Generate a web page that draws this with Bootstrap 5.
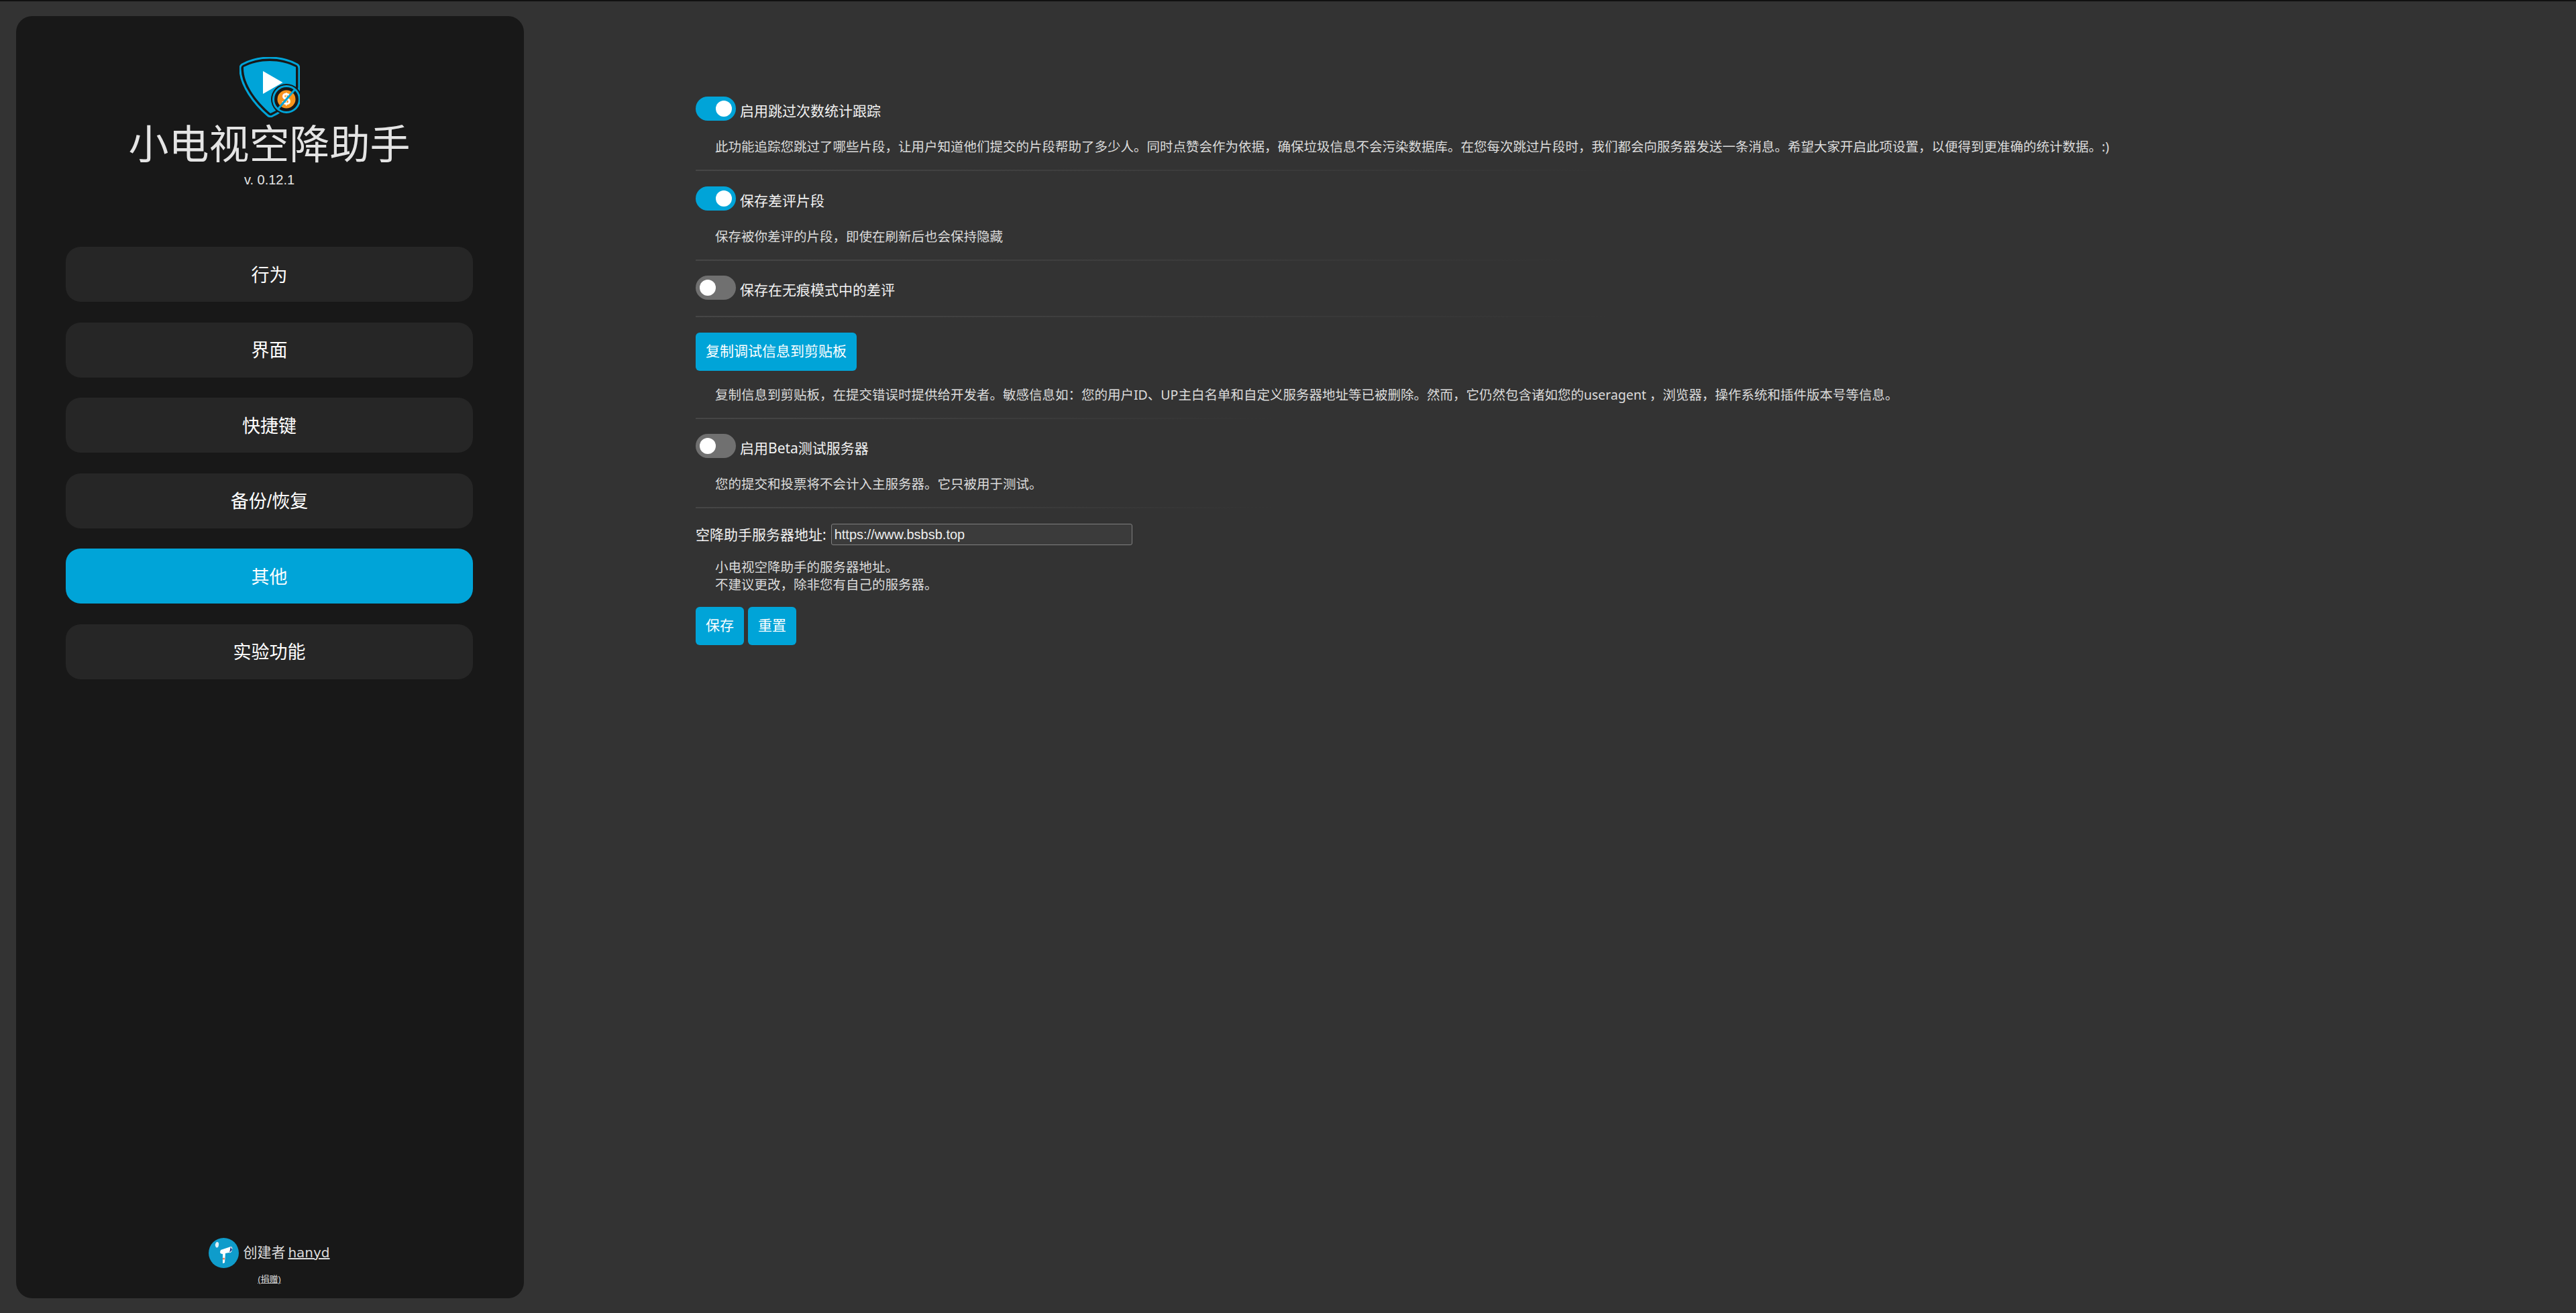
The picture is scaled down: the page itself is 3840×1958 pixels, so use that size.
<!DOCTYPE html>
<html lang="zh-CN">
<head>
  <meta charset="UTF-8" />
  <title>小电视空降助手</title>
  <link href="https://cdn.jsdelivr.net/npm/bootstrap@5.3.0/dist/css/bootstrap.min.css" rel="stylesheet" />
  <style>
    html, body { height: 100%; }
    body {
      background: #333;
      color: #e6e6e6;
      font-family: "Liberation Sans", "Noto Sans CJK SC", sans-serif;
      border-top: 2px solid #111;
      overflow: hidden;
    }
    .side-panel {
      width: 757px;
      height: 1912px;
      margin: 22px 0 0 24px;
      background: #181818;
      border-radius: 24px;
      padding: 61px 76px 0 74px;
    }
    .side-logo { width: 90px; height: 90px; display: block; }
    .side-title { font-size: 60px; line-height: 70px; font-weight: 400; margin: 7px 0 0; color: #e4e4e4; white-space: nowrap; }
    .side-ver { font-size: 20px; line-height: 24px; margin-top: 4px; color: #e4e4e4; }
    .side-menu { margin-top: 88px; gap: 30.5px; }
    .side-item {
      height: 82px;
      border-radius: 22px;
      background: #262626;
      color: #fff;
      font-size: 27px;
      border: 0;
      padding-top: 10px;
    }
    .side-item:hover { background: #2e2e2e; color: #fff; }
    .side-item.on { background: #00a4d8; }
    .side-foot { margin-bottom: 20px; color: #ddd; }
    .foot-line { font-size: 21px; line-height: 45px; gap: 6px; }
    .foot-line a, .foot-gift a { color: #ddd; }
    .foot-name { font-family: "DejaVu Sans", sans-serif; font-size: 20px; margin-left: 4px; }
    .foot-gift { font-size: 13px; line-height: 16px; margin-top: 9px; }
    .main-panel { padding: 142px 0 0 256px; flex: 1; font-family: "Noto Sans", "Noto Sans CJK SC", sans-serif; }
    .opt-row { font-size: 21px; height: 36px; color: #f2f2f2; gap: 6px; }
    .opt-row label { line-height: 26px; padding-top: 6px; }
    .form-switch .sw-toggle {
      width: 60px;
      height: 36px;
      margin: 0;
      float: none;
      border: 0;
      background-color: #707070;
      --bs-form-switch-bg: url("data:image/svg+xml,%3csvg xmlns='http://www.w3.org/2000/svg' viewBox='-4 -4 8 8'%3e%3ccircle r='2.67' fill='%23fff'/%3e%3c/svg%3e");
      box-shadow: none;
    }
    .form-switch .sw-toggle:checked {
      background-color: #00a4d8;
      --bs-form-switch-bg: url("data:image/svg+xml,%3csvg xmlns='http://www.w3.org/2000/svg' viewBox='-4 -4 8 8'%3e%3ccircle r='2.67' fill='%23fff'/%3e%3c/svg%3e");
    }
    .sw-wrap { padding: 0; margin: 0; min-height: 0; display: flex; }
    .opt-note { font-size: 19.5px; line-height: 26px; color: #dcdcdc; margin: 26px 0 0 29px; white-space: nowrap; }
    .opt-note.tight { margin-top: 23px; }
    .opt-note.srv { margin-top: 20px; }
    .fade-rule { height: 2px; margin: 21px 0 22.5px; background: linear-gradient(to right, #464646, #333); }
    .fade-rule.no-note { margin-top: 24px; }
    .w-a { width: 1411px; }
    .w-b { width: 1315px; }
    .w-c { width: 1365px; }
    .w-d { width: 860px; }
    .sky-btn {
      background: #00a4d8;
      color: #fff;
      border: 0;
      height: 57px;
      border-radius: 6px;
      font-size: 21px;
      padding: 0 15px;
    }
    .sky-btn:hover { background: #0094c4; color: #fff; }
    .srv-row { font-size: 21px; line-height: 32px; color: #f2f2f2; gap: 7px; }
    .srv-input {
      width: 449px;
      height: 32px;
      background: #3b3b3b;
      border: 1.5px solid #808080;
      border-radius: 3px;
      color: #eee;
      font-family: "Liberation Sans", sans-serif;
      font-size: 20px;
      padding: 0 4px;
      outline: 0;
    }
    .srv-actions { gap: 6px; }
  </style>
</head>
<body class="d-flex align-items-start">

  <aside class="side-panel d-flex flex-column align-items-center">
    <svg class="side-logo" viewBox="0 0 90 90">
      <path d="M45 1C60 1 75 5 86 11Q89 13 89 17V45C89 62 66 80 49 88Q45.500 90 42 87C22 70 1 42 1 18V16Q1 13 4 11C15 5 30 1 45 1Z" fill="#181818" stroke="#00a4d8" stroke-width="3"/>
      <path d="M45 6C59 6 72 9 84 15V45C84 60 64 76 46 84C26 67 6 41 6 17V15C18 9 31 6 45 6Z" fill="#00a4d8"/>
      <path d="M35 21L64.500 38L35 55Z" fill="#fff"/>
      <circle cx="70" cy="63" r="23" fill="#181818"/>
      <circle cx="70" cy="63" r="19.500" fill="none" stroke="#00a4d8" stroke-width="3"/>
      <circle cx="70" cy="63" r="13.500" fill="#f7941d"/>
      <text x="70" y="71" text-anchor="middle" font-family="Liberation Sans" font-size="23" font-weight="700" fill="#fff">$</text>
      <path d="M57 78L83 48" stroke="#00a4d8" stroke-width="3"/>
    </svg>
    <h1 class="side-title">小电视空降助手</h1>
    <div class="side-ver">v. 0.12.1</div>

    <nav class="side-menu d-flex flex-column w-100">
      <button class="btn side-item">行为</button>
      <button class="btn side-item">界面</button>
      <button class="btn side-item">快捷键</button>
      <button class="btn side-item">备份/恢复</button>
      <button class="btn side-item on">其他</button>
      <button class="btn side-item">实验功能</button>
    </nav>

    <footer class="side-foot mt-auto text-center">
      <div class="foot-line d-flex align-items-center">
        <svg width="45" height="45" viewBox="0 0 45 45">
          <circle cx="22.500" cy="22.500" r="22.500" fill="#0f9ccb"/>
          <path d="M12 6Q16 6 15 11Q14 16 11 14Q8 10 12 6Z" fill="#dff1f7"/>
          <path d="M18 18L33 13Q36 13 35 18Q34 23 30 22L25 23L24 37L21 38L21 24Q17 24 17 21Z" fill="#fff"/>
          <path d="M33 13L35 18L31 22Z" fill="#123a8c"/>
          <circle cx="22.500" cy="31" r="1.500" fill="#e8714a"/>
        </svg>
        <span>创建者<a class="foot-name" href="#">hanyd</a></span>
      </div>
      <div class="foot-gift"><a href="#">(捐赠)</a></div>
    </footer>
  </aside>

  <main class="main-panel">
    <div class="opt-row d-flex align-items-center">
      <div class="form-check form-switch sw-wrap"><input class="form-check-input sw-toggle" type="checkbox" id="optStats" checked /></div>
      <label for="optStats">启用跳过次数统计跟踪</label>
    </div>
    <p class="opt-note mb-0">此功能追踪您跳过了哪些片段，让用户知道他们提交的片段帮助了多少人。同时点赞会作为依据，确保垃圾信息不会污染数据库。在您每次跳过片段时，我们都会向服务器发送一条消息。希望大家开启此项设置，以便得到更准确的统计数据。:)</p>
    <div class="fade-rule w-a"></div>

    <div class="opt-row d-flex align-items-center">
      <div class="form-check form-switch sw-wrap"><input class="form-check-input sw-toggle" type="checkbox" id="optDown" checked /></div>
      <label for="optDown">保存差评片段</label>
    </div>
    <p class="opt-note mb-0">保存被你差评的片段，即使在刷新后也会保持隐藏</p>
    <div class="fade-rule w-b"></div>

    <div class="opt-row d-flex align-items-center">
      <div class="form-check form-switch sw-wrap"><input class="form-check-input sw-toggle" type="checkbox" id="optPrivate" /></div>
      <label for="optPrivate">保存在无痕模式中的差评</label>
    </div>
    <div class="fade-rule no-note w-c"></div>

    <button class="btn sky-btn">复制调试信息到剪贴板</button>
    <p class="opt-note tight mb-0">复制信息到剪贴板，在提交错误时提供给开发者。敏感信息如：您的用户ID、UP主白名单和自定义服务器地址等已被删除。然而，它仍然包含诸如您的useragent ，浏览器，操作系统和插件版本号等信息。</p>
    <div class="fade-rule w-d"></div>

    <div class="opt-row d-flex align-items-center">
      <div class="form-check form-switch sw-wrap"><input class="form-check-input sw-toggle" type="checkbox" id="optBeta" /></div>
      <label for="optBeta">启用Beta测试服务器</label>
    </div>
    <p class="opt-note mb-0">您的提交和投票将不会计入主服务器。它只被用于测试。</p>
    <div class="fade-rule w-d"></div>

    <div class="srv-row d-flex align-items-center">
      <label for="srvAddr">空降助手服务器地址:</label>
      <input class="srv-input" id="srvAddr" type="text" value="https://www.bsbsb.top" />
    </div>
    <p class="opt-note srv mb-0">小电视空降助手的服务器地址。<br />不建议更改，除非您有自己的服务器。</p>
    <div class="d-flex mt-3 pt-1 srv-actions">
      <button class="btn sky-btn">保存</button>
      <button class="btn sky-btn">重置</button>
    </div>
  </main>

  <script src="https://cdn.jsdelivr.net/npm/bootstrap@5.3.0/dist/js/bootstrap.bundle.min.js"></script>
</body>
</html>
